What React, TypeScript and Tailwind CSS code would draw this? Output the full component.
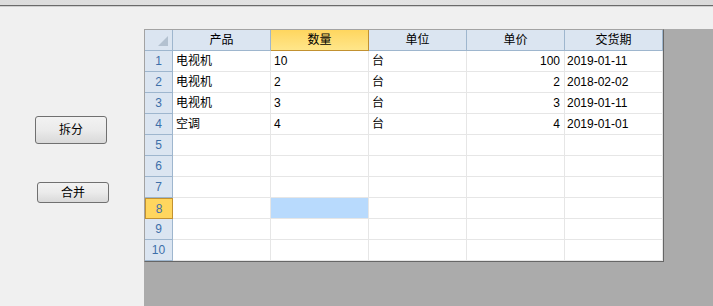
import React from 'react';

const columns = ['产品', '数量', '单位', '单价', '交货期'];

type Row = [string, string, string, string, string];

const rows: Row[] = [
  ['电视机', '10', '台', '100', '2019-01-11'],
  ['电视机', '2', '台', '2', '2018-02-02'],
  ['电视机', '3', '台', '3', '2019-01-11'],
  ['空调', '4', '台', '4', '2019-01-01'],
  ['', '', '', '', ''],
  ['', '', '', '', ''],
  ['', '', '', '', ''],
  ['', '', '', '', ''],
  ['', '', '', '', ''],
  ['', '', '', '', ''],
];

const activeRow = 7;
const activeCol = 1;

const font = { fontFamily: '"Liberation Sans", "Noto Sans CJK SC", sans-serif' };

const Button = ({ label, className }: { label: string; className: string }) => (
  <button
    className={`w-[72px] rounded-[3px] border border-[#707070] bg-gradient-to-b from-[#f2f2f2] via-[#ebebeb] to-[#d9d9d9] text-[12px] text-black ${className}`}
  >
    {label}
  </button>
);

export default function App() {
  return (
    <div className="w-[713px] h-[306px] bg-[#f0f0f0] flex flex-col overflow-hidden text-[12px]" style={font}>
      {/* window title strip */}
      <div className="h-[5px] bg-gradient-to-r from-[#dcdcdc] via-[#e4e4e4] to-[#dadada]" />
      <div className="h-[1px] bg-[#6a6a6a]" />
      <div className="h-[1px] bg-[#cfcfcf]" />

      <div className="flex flex-1">
        {/* buttons */}
        <div className="w-[144px] flex flex-col items-start">
          <Button label="拆分" className="h-[28px] mt-[109px] ml-[35px]" />
          <Button label="合并" className="h-[21px] mt-[38px] ml-[37px]" />
        </div>

        {/* sheet area */}
        <div className="flex-1 mt-[22px] bg-[#ababab]">
          <div className="w-[520px] border-l border-t border-[#a3a3a3] border-r border-b border-r-[#666666] border-b-[#666666] bg-white">
            <div className="grid grid-cols-[28px_repeat(5,98px)] auto-rows-[21px]">
              {/* corner */}
              <div className="relative bg-[#dbe5f1] border-r border-b border-[#9eb6ce]">
                <div className="absolute right-[4px] bottom-[4px] w-0 h-0 border-l-[10px] border-l-transparent border-b-[10px] border-b-[#b3c1d0]" />
              </div>
              {columns.map((c, i) => (
                <div
                  key={c}
                  className={
                    i === activeCol
                      ? 'flex items-center justify-center bg-gradient-to-b from-[#ffd65e] to-[#ffe68a] border-r border-b border-[#c29130] text-black'
                      : 'flex items-center justify-center bg-[#dbe5f1] border-r border-b border-[#9eb6ce] text-black'
                  }
                >
                  {c}
                </div>
              ))}

              {rows.map((r, ri) => (
                <React.Fragment key={ri}>
                  <div
                    className={
                      ri === activeRow
                        ? 'flex items-center justify-center bg-[#ffd65e] border border-[#c29130] text-[#3d6fa9]'
                        : 'flex items-center justify-center bg-[#dbe5f1] border-r border-b border-[#9eb6ce] text-[#3d6fa9]'
                    }
                  >
                    {ri + 1}
                  </div>
                  {r.map((v, ci) => (
                    <div
                      key={ci}
                      className={`flex items-center border-r border-b border-[#e6e6e6] ${
                        ci === 3 ? 'justify-end pr-[4px]' : ci === 4 ? 'pl-[2px]' : 'pl-[3px]'
                      } ${ri === activeRow && ci === activeCol ? 'bg-[#b8dafd]' : 'bg-white'}`}
                    >
                      {v}
                    </div>
                  ))}
                </React.Fragment>
              ))}
            </div>
          </div>
        </div>
      </div>
    </div>
  );
}
